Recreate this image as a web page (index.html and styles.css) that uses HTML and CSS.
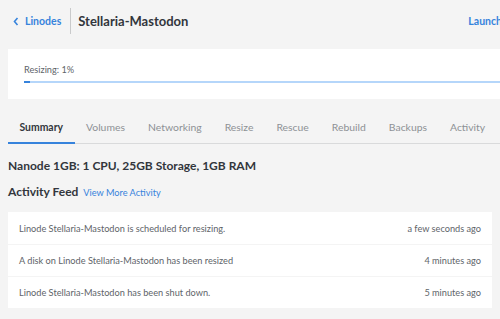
FILE: index.html
```html
<!DOCTYPE html>
<html lang="en">
<head>
  <meta charset="UTF-8">
  <title>Stellaria-Mastodon - Linodes</title>
  <link rel="stylesheet" href="styles.css">
</head>
<body>
  <header class="page-header">
    <div class="crumbs">
      <a href="#" class="back-link">
        <svg class="chevron" viewBox="0 0 6 9" width="6" height="9"><path d="M4.5 1L1.5 4.5L4.5 8" fill="none" stroke="currentColor" stroke-width="1.6"/></svg>
        Linodes
      </a>
      <h1 class="title">Stellaria-Mastodon</h1>
    </div>
    <a href="#" class="launch">Launch Console</a>
  </header>

  <section class="progress-card">
    <div class="progress-label">Resizing: 1%</div>
    <div class="progress-track"><div class="progress-fill" style="width: 1%"></div></div>
  </section>

  <nav class="tabs">
    <a class="tab active">Summary</a>
    <a class="tab">Volumes</a>
    <a class="tab">Networking</a>
    <a class="tab">Resize</a>
    <a class="tab">Rescue</a>
    <a class="tab">Rebuild</a>
    <a class="tab">Backups</a>
    <a class="tab">Activity</a>
  </nav>

  <h2 class="plan">Nanode 1GB: 1 CPU, 25GB Storage, 1GB RAM</h2>

  <div class="feed-head">
    <h3>Activity Feed</h3>
    <a href="#">View More Activity</a>
  </div>

  <ul class="feed">
    <li><span>Linode Stellaria-Mastodon is scheduled for resizing.</span><span>a few seconds ago</span></li>
    <li><span>A disk on Linode Stellaria-Mastodon has been resized</span><span>4 minutes ago</span></li>
    <li><span>Linode Stellaria-Mastodon has been shut down.</span><span>5 minutes ago</span></li>
  </ul>
</body>
</html>
```

FILE: styles.css
```css
* {
  margin: 0;
  padding: 0;
  box-sizing: border-box;
}

html, body {
  overflow: hidden;
}

body {
  font-family: Lato, "Liberation Sans", sans-serif;
  background: #f4f4f4;
  color: #32363c;
  padding: 8px 0 0 8px;
  width: 540px;
}

a {
  text-decoration: none;
  color: #3683dc;
}

.page-header {
  display: flex;
  align-items: center;
  height: 26px;
  margin-bottom: 15px;
  white-space: nowrap;
}

.crumbs {
  display: flex;
  align-items: center;
  flex-shrink: 0;
  height: 100%;
}

.back-link {
  display: flex;
  align-items: center;
  gap: 6px;
  font-size: 10.5px;
  font-weight: 700;
  padding: 0 9px 0 5px;
  height: 100%;
  border-right: 1px solid #c9cacb;
}

.chevron {
  margin-top: 1px;
}

.title {
  font-size: 13px;
  font-weight: 700;
  margin-left: 7px;
  color: #32363c;
}

.launch {
  flex-shrink: 0;
  font-size: 10.5px;
  font-weight: 700;
  margin-left: 280px;
}

.progress-card {
  background: #fff;
  height: 50px;
  padding: 15px 16px 0;
}

.progress-label {
  font-size: 9.2px;
  line-height: 12px;
  color: #606469;
}

.progress-track {
  margin-top: 5px;
  height: 2px;
  background: #b5d6fa;
}

.progress-fill {
  height: 100%;
  background: #3683dc;
  min-width: 6px;
}

.tabs {
  display: flex;
  margin-top: 12px;
  box-shadow: inset 0 -1px 0 #d9dadb;
  white-space: nowrap;
}

.tab {
  font-size: 10.4px;
  line-height: 14px;
  color: #8d9195;
  padding: 9px 11.5px 8px;
  border-bottom: 2px solid transparent;
}

.tab.active {
  color: #32363c;
  font-weight: 700;
  border-bottom-color: #3683dc;
}

.plan {
  font-size: 12px;
  line-height: 16px;
  font-weight: 700;
  margin-top: 14px;
}

.feed-head {
  display: flex;
  align-items: baseline;
  gap: 5px;
  margin-top: 10px;
  line-height: 16px;
}

.feed-head h3 {
  font-size: 12px;
  font-weight: 700;
}

.feed-head a {
  font-size: 9.2px;
}

.feed {
  list-style: none;
  background: #fff;
  width: 484px;
  margin-top: 11px;
}

.feed li {
  display: flex;
  justify-content: space-between;
  align-items: center;
  height: 32px;
  padding: 0 11px;
  font-size: 9.2px;
  color: #606469;
  border-top: 1px solid #f4f4f4;
}

.feed li:first-child {
  border-top: none;
}
```
